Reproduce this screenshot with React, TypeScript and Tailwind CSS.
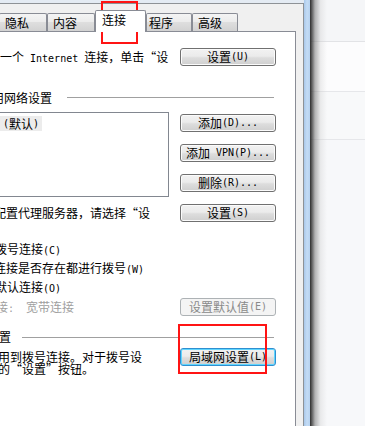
import type { ReactNode } from 'react';

function M({ children }: { children: ReactNode }) {
  return <span className="font-['DejaVu_Sans_Mono',monospace] text-[10px] whitespace-pre">{children}</span>;
}

function Btn({ children, kind = 'normal' }: { children: ReactNode; kind?: 'normal' | 'disabled' | 'focus' }) {
  const look =
    kind === 'disabled'
      ? 'border-[#adb2b5] bg-[#f4f4f4] text-[#8a8a8a]'
      : kind === 'focus'
        ? 'border-[#2f8fd0] bg-[linear-gradient(#f2f2f2,#ebebeb_45%,#dddddd_55%,#cfcfcf)] shadow-[inset_0_0_0_1px_#5fd6ff] text-black'
        : 'border-[#707070] bg-[linear-gradient(#f2f2f2,#ebebeb_45%,#dddddd_55%,#cfcfcf)] shadow-[inset_0_0_0_1px_#fbfbfb] text-black';
  return (
    <div className={`w-[96px] h-[18px] shrink-0 rounded-[3px] border flex items-center justify-center text-[12px] leading-none ${look}`}>
      {children}
    </div>
  );
}

function Tab({ label, w, pl, active }: { label: string; w: string; pl: string; active?: boolean }) {
  if (active) {
    return (
      <div className={`${w} ${pl} h-[22px] -mb-px relative z-10 bg-white border border-b-0 border-[#898c95] rounded-t-[2px] leading-[18px] text-[12px]`}>
        {label}
      </div>
    );
  }
  return (
    <div
      className={`${w} ${pl} h-[18px] border border-b-0 border-[#898c95] rounded-t-[2px] bg-[linear-gradient(#f4f4f4,#ebebeb_50%,#dedede_50%,#d2d2d2)] leading-[17px] text-[12px]`}
    >
      {label}
    </div>
  );
}

export default function App() {
  return (
    <div
      lang="zh-CN"
      className="relative w-[365px] h-[426px] overflow-hidden flex font-['Noto_Sans_CJK_SC',sans-serif] text-black"
    >
      {/* dialog */}
      <div className="w-[304px] shrink-0 flex flex-col">
        <div className="h-[3px] bg-[#e4ebf3]" />
        <div className="flex-1 flex flex-col bg-[#f0f0f0] border-t border-r border-[#8e9296]">
          <div className="mt-[6px] h-[21px] flex items-end -ml-px">
            <Tab label="隐私" w="w-[48px]" pl="pl-[5px]" />
            <Tab label="内容" w="w-[48px]" pl="pl-[5px]" />
            <Tab label="连接" w="w-[51px]" pl="pl-[6px]" active />
            <Tab label="程序" w="w-[46px]" pl="pl-[2px]" />
            <Tab label="高级" w="w-[46px]" pl="pl-[5px]" />
          </div>

          <div className="flex-1 mr-[7px] bg-white border-t border-r border-[#898c95] pr-[19px] text-[12px] flex flex-col">
            {/* row 1 */}
            <div className="mt-[16px] h-[18px] flex items-center">
              <div className="flex-1 whitespace-nowrap leading-none">
                一个<M> Internet </M>连接，单击“设
              </div>
              <Btn>
                设置<M>(U)</M>
              </Btn>
            </div>

            {/* dial-up header */}
            <div className="mt-[25px] h-[13px] flex items-center">
              <span className="-ml-[20px] whitespace-nowrap leading-none">专用网络设置</span>
              <div className="flex-1 h-px bg-[#a0a0a0] ml-[15px] mr-[2px]" />
            </div>

            {/* list + buttons */}
            <div className="mt-[8px] flex">
              <div className="-ml-[2px] w-[171px] h-[85px] border border-[#828790] bg-white">
                <div className="mt-[3px] w-[43px] h-[15px] bg-[#ececec] pl-[4px] flex items-center leading-none whitespace-nowrap">
                  <M>(</M>默认<M>)</M>
                </div>
              </div>
              <div className="ml-auto mt-[2px] flex flex-col gap-[12px]">
                <Btn>
                  添加<M>(D)...</M>
                </Btn>
                <Btn>
                  添加<M> VPN(P)...</M>
                </Btn>
                <Btn>
                  删除<M>(R)...</M>
                </Btn>
              </div>
            </div>

            {/* proxy row */}
            <div className="mt-[7px] h-[18px] flex items-center">
              <div className="flex-1 -ml-[6px] whitespace-nowrap leading-none">配置代理服务器，请选择“设</div>
              <Btn>
                设置<M>(S)</M>
              </Btn>
            </div>

            {/* radio lines */}
            <div className="mt-[18px] flex flex-col leading-[17px] whitespace-nowrap">
              <div className="-ml-[5px]">
                拨号连接<M>(C)</M>
              </div>
              <div className="-ml-[6px]">
                连接是否存在都进行拨号<M>(W)</M>
              </div>
              <div className="-ml-[5px]">
                默认连接<M>(O)</M>
              </div>
            </div>

            <div className="mt-px h-[18px] flex items-center">
              <div className="flex-1 -ml-[4px] whitespace-nowrap leading-none text-[#a0a0a0]">
                接<M>:  </M>宽带连接
              </div>
              <Btn kind="disabled">
                设置默认值<M>(E)</M>
              </Btn>
            </div>

            {/* LAN header */}
            <div className="mt-[14px] h-[14px] flex items-center">
              <span className="-ml-px leading-none">置</span>
              <div className="flex-1 h-px bg-[#a0a0a0] ml-[11px] mr-[2px]" />
            </div>

            <div className="mt-[4px] flex items-start">
              <div className="flex-1 mt-[3px] -ml-[2px] leading-[12px] whitespace-nowrap">
                <div>用到拨号连接。对于拨号设</div>
                <div>的“设置”按钮。</div>
              </div>
              <Btn kind="focus">
                局域网设置<M>(L)</M>
              </Btn>
            </div>
          </div>
        </div>
      </div>

      {/* window frame */}
      <div className="w-[6px] shrink-0 bg-[linear-gradient(to_right,#a9c8ea,#c4dcf5_50%,#b6d2f0)]" />
      <div className="w-px shrink-0 bg-[#3a3a3a]" />

      {/* page behind */}
      <div className="relative flex-1 flex flex-col">
        <div className="h-[42px] bg-[#f5f6f8] border-b border-[#e2e3e6]" />
        <div className="h-[50px] bg-[#fcfcfd] border-b border-[#e6e7ea]" />
        <div className="h-[48px] bg-[#f8f9fa] border-b border-[#e6e7ea]" />
        <div className="flex-1 bg-[#f7f8fa]" />
        <div className="absolute inset-y-0 left-0 w-[16px] bg-[linear-gradient(to_right,rgba(40,40,40,0.85),rgba(120,120,120,0.55)_25%,rgba(200,200,200,0.3)_60%,rgba(240,240,240,0))]" />
      </div>

      {/* red highlight boxes */}
      <div className="absolute left-[101px] top-[1px] w-[37px] h-[43px] border-2 border-[#ff1414]" />
      <div className="absolute left-[178px] top-[324px] w-[89px] h-[50px] border-2 border-[#ff1414]" />
    </div>
  );
}
